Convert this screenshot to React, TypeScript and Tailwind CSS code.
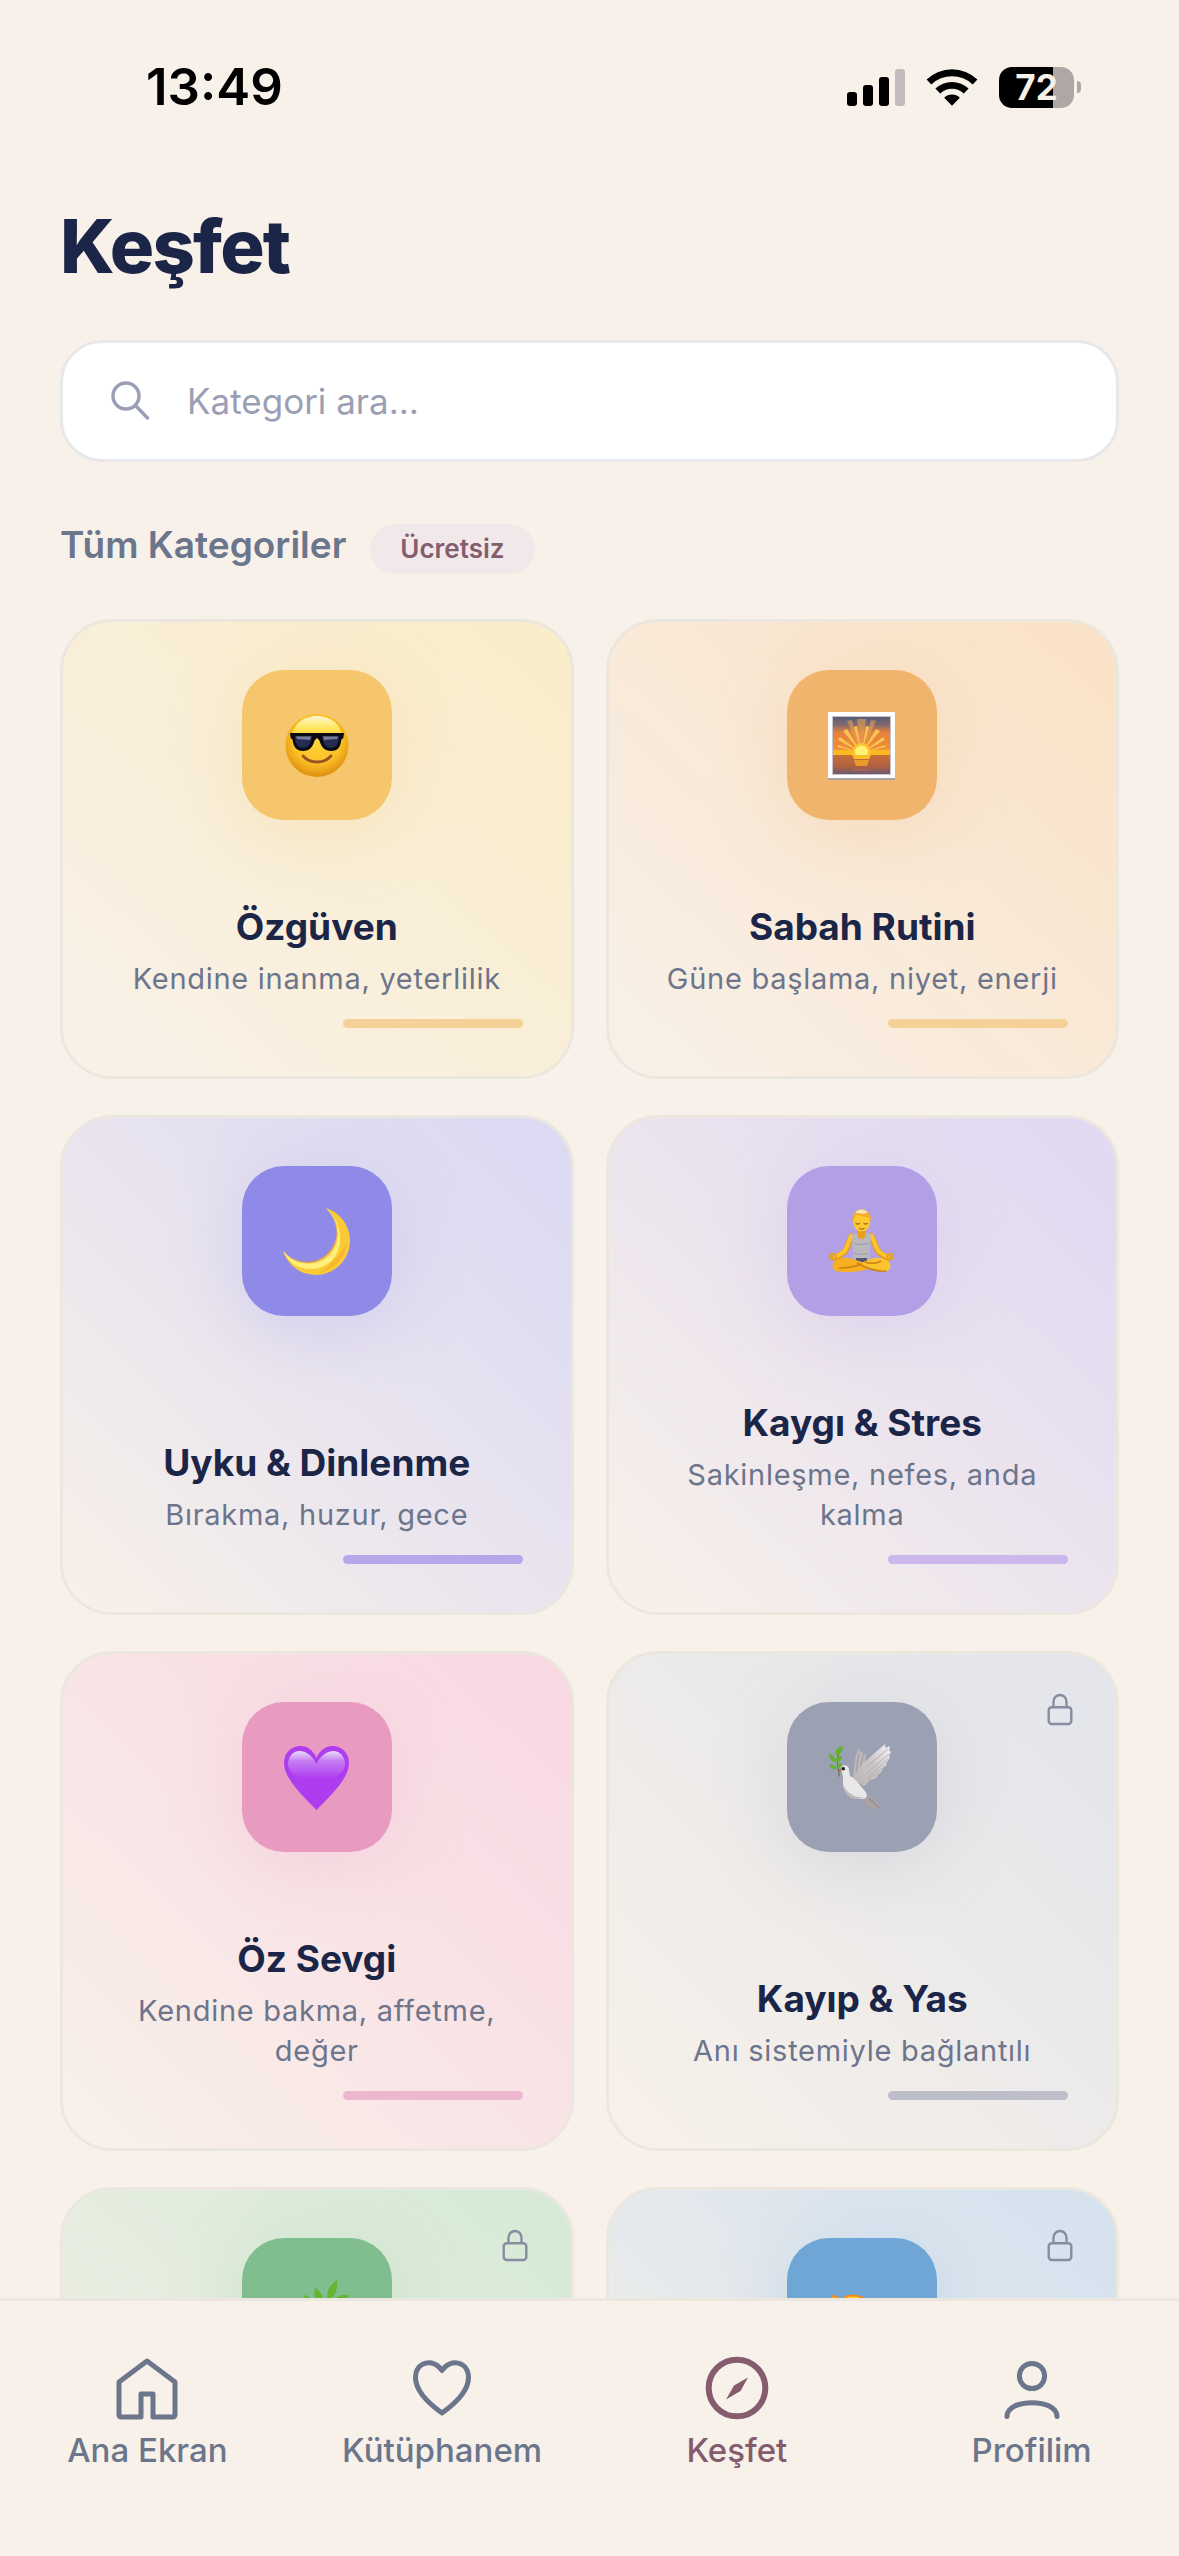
import type { ReactNode } from "react";
import clsx from "clsx";

/* ---------- Emoji drawings, all on a 72 x 72 canvas ---------- */

function CoolFace() {
    return (
        <svg viewBox="0 0 72 72" className="size-[72px]" aria-hidden="true">
            <defs>
                <radialGradient id="face" cx="0.5" cy="0.4" r="0.6">
                    <stop offset="0" stopColor="#ffd83f" />
                    <stop offset="0.65" stopColor="#fbbf24" />
                    <stop offset="1" stopColor="#dd8f10" />
                </radialGradient>
                <linearGradient id="shine" x1="0" y1="0" x2="0" y2="1">
                    <stop offset="0" stopColor="#fdf0d0" />
                    <stop offset="0.4" stopColor="#fff08a" />
                    <stop offset="1" stopColor="#ffe545" stopOpacity="0.6" />
                </linearGradient>
            </defs>
            <circle cx="36" cy="36.500" r="31.500" fill="url(#face)" />
            <path d="M12 25c1-11 12-18 24-18s23 7 24 18z" fill="url(#shine)" />
            <path d="M9 24h54l-.6 5-2 1.500c-1 8-4 11.500-10 11.500-7 0-10-4-12-10.500L36 29l-2.400 2.500C31.600 38 28.600 42 22 42c-6 0-9.500-3.500-10.500-11.500L9.600 29z" fill="#0a0a14" />
            <path d="M14 27h17c-1 8-4 12-9 12s-8-4-8-12zM41 27h17c0 8-3 12-8 12s-8-4-9-12z" fill="#252c50" />
            <path d="M15 27.500h15l-1 3.500-13-1zM42 27.500h15l-1 2.500-13 1z" fill="#777c98" />
            <path d="M22 47c7 8 21 8 28 0" fill="none" stroke="#9b5226" strokeWidth="2.800" strokeLinecap="round" />
        </svg>
    );
}

function Sunrise() {
    return (
        <svg viewBox="0 0 72 72" className="size-[72px]" aria-hidden="true">
            <defs>
                <linearGradient id="sky" x1="0" y1="0" x2="0" y2="1">
                    <stop offset="0" stopColor="#565e78" />
                    <stop offset="0.2" stopColor="#7f6870" />
                    <stop offset="0.4" stopColor="#e5803c" />
                    <stop offset="1" stopColor="#f69438" />
                </linearGradient>
                <linearGradient id="sea" x1="0" y1="0" x2="0" y2="1">
                    <stop offset="0" stopColor="#c96f3b" />
                    <stop offset="0.6" stopColor="#b0603f" />
                    <stop offset="1" stopColor="#6b5a74" />
                </linearGradient>
            </defs>
            <rect x="2" y="4" width="67" height="67" fill="#a9a4a5" />
            <rect x="2" y="3" width="67" height="66" fill="#fff" />
            <rect x="6" y="7" width="59" height="59" fill="#c8c4ca" />
            <rect x="7" y="8" width="57" height="38" fill="url(#sky)" />
            <path d="M35.500 44 31 10h9zM35.500 44 21 12l5-1zM35.500 44 50 12l-5-1z" fill="#e6a055" opacity="0.6" />
            <path d="M35.500 44 17 22l4-2zM35.500 44 12 31l2-3zM35.500 44 54 22l-4-2zM35.500 44l23.500-13-2-3zM35.500 44 12 38v-2zM35.500 44 59 38v-2zM35.500 44 28 18l3-1zM35.500 44 43 18l-3-1z" fill="#f8c553" />
            <path d="M7 41h57v5H7z" fill="#fbba22" />
            <circle cx="35.500" cy="43" r="9" fill="#fdc52d" />
            <circle cx="35.500" cy="43" r="6.500" fill="#fff176" />
            <rect x="7" y="46" width="57" height="19" fill="url(#sea)" />
            <path d="M26 46h19l-2 4H28z" fill="#f9bd26" />
            <path d="M28 51h15l-2 6H30z" fill="#e99a2b" />
            <path d="M27 60h17v2H27z" fill="#a96252" />
        </svg>
    );
}

function Moon() {
    return (
        <svg viewBox="0 0 72 72" className="size-[72px]" aria-hidden="true">
            <path d="M44.700 3A34.200 34.200 0 1 1 2 45.500 30.400 30.400 0 1 0 44.700 3z" fill="#fcca35" />
            <path d="M44.700 3C67 21 64 61 32 64 18 65 7 58 2 45.500 11 60 30 61 42 53 60 41 60 18 44.700 3z" fill="#fff07c" />
            <path d="M48 5C63 24 58 46 42 55c-11 6-24 4-33-3 13 7 26 6 35-2 14-12 15-28 4-45z" fill="#ef9d1b" opacity="0.55" />
            <path d="M66 38c-2 17-15 27-28 30 11-7 20-17 28-30z" fill="#f0a72b" opacity="0.55" />
        </svg>
    );
}

function Lotus() {
    return (
        <svg viewBox="0 0 72 72" className="size-[72px]" aria-hidden="true">
            <path d="M26 31C20 40 24 46 9 53" fill="none" stroke="#e89b16" strokeWidth="6" strokeLinecap="round" />
            <path d="M45 31c6 9 2 15 17 22" fill="none" stroke="#e89b16" strokeWidth="6" strokeLinecap="round" />
            <path d="M25.500 30.500C20 40 24 45 9 52" fill="none" stroke="#fdc52d" strokeWidth="4" strokeLinecap="round" />
            <path d="M45.500 30.500c5.500 9.500 1.500 14.500 16.500 21.500" fill="none" stroke="#fdc52d" strokeWidth="4" strokeLinecap="round" />
            <path d="M31 23h9v8l-4.500 5L31 31z" fill="#e9a01d" />
            <path d="M26 29c2 0 4-.5 5-1 0 8 9 8 9 0 1 .5 3 1 5 1 0 9-2 14-.5 25H26.500c1.500-11-.5-16-.5-25z" fill="#b9b8bd" />
            <path d="M28 38c5 2 10 2 15 0M28 48c5 2 10 2 15 0" fill="none" stroke="#a2a1a8" strokeWidth="1.200" />
            <path d="M30 53h11v11H30z" fill="#565572" />
            <path d="M13 54c8-3 14 0 28 5 5 2 3 5-2 6-9 2-22 3-29 1-6-3-4-10 3-12z" fill="#f6b021" />
            <path d="M58 54c-8-3-14 0-25 5 7 5 19 8 28 7 6-3 4-10-3-12z" fill="#fcc331" />
            <path d="M31 58c9 5 20 9 29 8M13 63c8 0 15-1 23-4M39 57c6 2 11 2 16-1" fill="none" stroke="#cb8012" strokeWidth="1.500" />
            <circle cx="7" cy="51.500" r="2.800" fill="none" stroke="#eba019" strokeWidth="2" />
            <circle cx="64" cy="51.500" r="2.800" fill="none" stroke="#eba019" strokeWidth="2" />
            <ellipse cx="35.600" cy="17" rx="8.500" ry="9.500" fill="#fdc931" />
            <path d="M26.200 17c-1-17 20-17 19 0-1-3-2-4-3-5-5 0-9-1-12-3 0 3-3 5-4 8z" fill="#f3ac24" />
            <path d="M29 7.500c4-4 9-4 13 0-4 2-9 1-13 0z" fill="#fbe5b6" />
            <path d="M30 18.500c1 .8 2 .8 3.500 0M38 18.500c1 .8 2 .8 3.500 0M33.500 23.500c1.500.8 3 .8 4.500 0" fill="none" stroke="#a5651a" strokeWidth="1.200" strokeLinecap="round" />
        </svg>
    );
}

function PurpleHeart() {
    return (
        <svg viewBox="0 0 72 72" className="size-[72px]" aria-hidden="true">
            <defs>
                <linearGradient id="heart" x1="0" y1="0" x2="0" y2="1">
                    <stop offset="0" stopColor="#e8defa" />
                    <stop offset="0.35" stopColor="#c77df3" />
                    <stop offset="1" stopColor="#ae3df0" />
                </linearGradient>
            </defs>
            <path d="M35.500 69C20 53 3 37 3 22 3 3 28-2 35.500 17 43-2 68 3 68 22c0 15-17 31-32.500 47z" fill="#ae3df0" />
            <path d="M35.500 38C18 38 7 34 7 22 9 6 27 6 35.500 23 44 6 62 6 64 22 64 34 53 38 35.500 38z" fill="url(#heart)" />
        </svg>
    );
}

function Dove() {
    return (
        <svg viewBox="0 0 72 72" className="size-[72px]" aria-hidden="true">
            <defs>
                <linearGradient id="wing" x1="1" y1="0" x2="0" y2="1">
                    <stop offset="0" stopColor="#f4f3f5" />
                    <stop offset="0.5" stopColor="#c9c4c6" />
                    <stop offset="1" stopColor="#bbb4b5" />
                </linearGradient>
            </defs>
            <path d="M13.300 35.500C13 27 8 20 15.500 6" fill="none" stroke="#557f3c" strokeWidth="1.200" />
            <path d="M17 5c-6 1-8 4-7.500 9 5 0 7.500-4 7.500-9zM3 12c5 2 6 5 6 9-4-1-6.500-4-6-9zM16 15c-5 0-7 2-7 6 4 1 6.500-2 7-6zM3 24c4-1.500 6 0 8 3-3 2-6 1-8-3zM15.500 22c-3 0-4 2-4 5 3 0 4-2 4-5z" fill="#64b32e" />
            <path d="M27 36c1-7 1-15 3-22l2.500-7 2 5 2-2 1 5 2-3c1 8-2 19-7 27z" fill="#bcb6b8" />
            <path d="M30 34c1-7 1-13 3-21M33 32c1-6 3-11 4-17" fill="none" stroke="#9d989f" strokeWidth="1" />
            <path d="M38 54c6 1 12 5 18 12l-2 2.500c-8 0-13-4-18-9z" fill="#a9a3a5" />
            <path d="M43 58c4 2 7 5 10 9" fill="none" stroke="#857f88" strokeWidth="1" />
            <path d="M27 38c3-8 8-14 15-20L59 3l.5 4L64 5l-1 5 2 .5-2 5 1 1-4 6 1 1-5 5v2l-5 4v2l-7 3-6 6z" fill="url(#wing)" />
            <path d="M62 8 40 26M63 13 41 32M62 18 42 36M59 25 42 39" fill="none" stroke="#aaa4aa" strokeWidth="0.700" />
            <path d="M15 28c0-5 8-5 8 1l1 6c5 2 9 8 14 14 4 4 4 8-1 9-11 1-20-6-20-16 0-6 0-8-2-14z" fill="#e9e7e7" />
            <path d="M18 45c4 8 11 12 20 11-9 5-19 1-20-11z" fill="#bfbab9" />
            <circle cx="17.200" cy="27.800" r="1.800" fill="#1e1b1c" />
            <path d="m15 28-3.500 1.500 3 1.500z" fill="#bc5d4f" />
        </svg>
    );
}

function Herb() {
    return (
        <svg viewBox="0 0 72 72" className="size-[72px]" aria-hidden="true">
            <path d="M20 68c10-14 18-26 26-44" fill="none" stroke="#4f8f27" strokeWidth="2.500" />
            <path d="M56 3c-9 6-11 13-9 21 8-5 10-12 9-21zM34 11c7 4 8 9 8 16-8-3-10-9-8-16zM23 18c8 2 13 7 14 14-9-1-14-6-14-14zM68 18c-9-1-18 3-21 13 9 2 17-3 21-13zM14 32c10 0 15 5 18 12-9 1-15-3-18-12zM63 36c-9-3-17 0-22 9 9 3 17-1 22-9z" fill="#66b432" />
        </svg>
    );
}

function Handshake() {
    return (
        <svg viewBox="0 0 72 72" className="size-[72px]" aria-hidden="true">
            <path d="m6 18 5 1 4 3c6-6 16-5 22-2l10 4 16-3v22l-12 8-16 8-18-8L6 42z" fill="#ee8f1d" />
            <path d="m7 20 4 1 4 3c6-6 16-5 21-2l11 4 14-3v18l-10 8-16 7-16-8L7 40z" fill="#fdc52d" />
        </svg>
    );
}

/* ---------- Line icons ---------- */

function LockIcon() {
    return (
        <svg viewBox="0 0 40 40" className="size-10" fill="none" stroke="#878da0" strokeWidth="2.400" aria-hidden="true">
            <rect x="8.700" y="17.200" width="22.600" height="16.800" rx="3" />
            <path d="M13.500 17v-5.500a6.500 6.500 0 0 1 13 0V17" />
        </svg>
    );
}

function SearchIcon() {
    return (
        <svg viewBox="0 0 42 42" className="size-[42px] shrink-0" fill="none" stroke="#9b9fb3" strokeWidth="3.400" strokeLinecap="round" aria-hidden="true">
            <circle cx="17" cy="16" r="13" />
            <path d="m26.500 25.500 12 12.500" />
        </svg>
    );
}

function NavIcon({ children }: { children: ReactNode }) {
    return (
        <svg viewBox="0 0 72 72" className="size-[72px]" fill="none" stroke="currentColor" strokeWidth="5" strokeLinecap="round" strokeLinejoin="round" aria-hidden="true">
            {children}
        </svg>
    );
}

/* ---------- Data ---------- */

interface Category {
    id: string;
    title?: string;
    description?: string;
    icon: ReactNode;
    card: string;
    tile: string;
    bar: string;
    locked?: boolean;
}

const categories: Category[] = [
    {
        id: "confidence",
        title: "Özgüven",
        description: "Kendine inanma, yeterlilik",
        icon: <CoolFace />,
        card: "to-[#faedcb]",
        tile: "bg-[#f6c66c] shadow-[0_12px_72px_rgba(246,198,108,0.28)]",
        bar: "bg-[#f6d197]",
    },
    {
        id: "morning",
        title: "Sabah Rutini",
        description: "Güne başlama, niyet, enerji",
        icon: <Sunrise />,
        card: "to-[#fae3c9]",
        tile: "bg-[#f0b46c] shadow-[0_12px_72px_rgba(240,180,108,0.25)]",
        bar: "bg-[#f6d197]",
    },
    {
        id: "sleep",
        title: "Uyku & Dinlenme",
        description: "Bırakma, huzur, gece",
        icon: <Moon />,
        card: "to-[#dddaf3]",
        tile: "bg-[#8f8ae8] shadow-[0_12px_72px_rgba(143,138,232,0.25)]",
        bar: "bg-[#b8a6ea]",
    },
    {
        id: "stress",
        title: "Kaygı & Stres",
        description: "Sakinleşme, nefes, anda kalma",
        icon: <Lotus />,
        card: "to-[#e2daf2]",
        tile: "bg-[#b29fe6] shadow-[0_12px_72px_rgba(178,159,230,0.25)]",
        bar: "bg-[#cbb7ec]",
    },
    {
        id: "self-love",
        title: "Öz Sevgi",
        description: "Kendine bakma, affetme, değer",
        icon: <PurpleHeart />,
        card: "to-[#f9dae4]",
        tile: "bg-[#e89ac1] shadow-[0_12px_72px_rgba(232,154,193,0.25)]",
        bar: "bg-[#eeb7d0]",
    },
    {
        id: "grief",
        title: "Kayıp & Yas",
        description: "Anı sistemiyle bağlantılı",
        icon: <Dove />,
        card: "to-[#e4e6eb]",
        tile: "bg-[#9ba0b3] shadow-[0_12px_72px_rgba(155,160,179,0.25)]",
        bar: "bg-[#bdbeca]",
        locked: true,
    },
    {
        id: "nature",
        icon: <Herb />,
        card: "to-[#d7ead8]",
        tile: "bg-[#80be90] shadow-[0_12px_72px_rgba(128,190,144,0.25)]",
        bar: "bg-[#aed6b6]",
        locked: true,
    },
    {
        id: "relations",
        icon: <Handshake />,
        card: "to-[#d6e3ef]",
        tile: "bg-[#6fa6d6] shadow-[0_12px_72px_rgba(111,166,214,0.25)]",
        bar: "bg-[#a3c6e5]",
        locked: true,
    },
];

const tabs = [
    {
        label: "Ana Ekran",
        icon: <path d="M36 9 8 30v33a2 2 0 0 0 2 2h20V42h12v23h20a2 2 0 0 0 2-2V30z" />,
    },
    {
        label: "Kütüphanem",
        icon: <path d="M36 61C22 51 9.500 38 9.500 25.500 9.500 9 28 6 36 18.500 44 6 62.500 9 62.500 25.500 62.500 38 50 51 36 61z" />,
    },
    {
        label: "Keşfet",
        active: true,
        icon: (
            <>
                <circle cx="36" cy="36" r="28.300" strokeWidth="6" />
                <path d="M47 25.500 39.500 39 25 47.500 33 33.500z" fill="currentColor" stroke="none" />
            </>
        ),
    },
    {
        label: "Profilim",
        icon: (
            <>
                <circle cx="36" cy="24" r="12.600" />
                <path d="M11 64.500C11 46 61 46 61 64.500" />
            </>
        ),
    },
];

/* ---------- Sections ---------- */

function StatusBar() {
    return (
        <div className="flex h-[174px] shrink-0 items-center justify-between pr-[98px] pl-[146px] text-black">
            <span className="text-[51px] leading-[60px] font-semibold">13:49</span>
            <div className="flex items-center gap-[21px]">
                <svg viewBox="0 0 58 38" className="h-[38px] w-[58px]" aria-hidden="true">
                    <rect x="0" y="24" width="10" height="14" rx="3" />
                    <rect x="16" y="17" width="10" height="21" rx="3" />
                    <rect x="32" y="9" width="10" height="29" rx="3" />
                    <rect x="48" y="1" width="10" height="37" rx="3" fill="#c2bbb9" />
                </svg>
                <svg viewBox="0 0 52 38" className="h-[38px] w-[52px]" aria-hidden="true">
                    <path d="M.6 11.500a36.500 36.500 0 0 1 50.800 0l-4.700 5a29.800 29.800 0 0 0-41.400 0z" />
                    <path d="M9.400 20.600a24 24 0 0 1 33.200 0l-4.800 5a17 17 0 0 0-23.600 0z" />
                    <path d="M18.200 29.700a11.300 11.300 0 0 1 15.600 0L26 37.800z" />
                </svg>
                <div className="flex items-center gap-[3px]">
                    <div className="flex h-[41px] w-[75px] items-center justify-center rounded-[13px] bg-linear-to-r from-black from-72% to-[#afa7a5] to-72%">
                        <span className="text-[35px] leading-[41px] font-bold text-[#f8f1e9]">72</span>
                    </div>
                    <div className="h-3 w-1 rounded-r-full bg-[#afa7a5]" />
                </div>
            </div>
        </div>
    );
}

function CategoryCard({ category }: { category: Category }) {
    return (
        <button
            type="button"
            className={clsx(
                "relative flex min-h-[460px] flex-col items-center justify-between overflow-hidden rounded-[52px] border-3 border-[#ebe7df] bg-linear-to-tr from-[#f8f1e9] to-90% px-12 py-12",
                category.card,
            )}
        >
            <span className={clsx("flex size-[150px] shrink-0 items-center justify-center rounded-[42px]", category.tile)}>
                {category.icon}
            </span>
            {category.locked && (
                <span className="absolute top-9 right-9">
                    <LockIcon />
                </span>
            )}
            <span className="flex w-full flex-col pt-[83px]">
                <span className="text-[37px] leading-[48px] font-bold text-[#1b2547]">{category.title}</span>
                <span className="mt-2 text-[29px] leading-10 tracking-wide text-[#6c758c]">{category.description}</span>
                <span className={clsx("mt-5 h-[9px] w-[180px] self-end rounded-full", category.bar)} />
            </span>
        </button>
    );
}

function TabBar() {
    return (
        <nav className="grid h-[258px] shrink-0 grid-cols-4 border-t-3 border-[#ebe7df] bg-[#f8f1e9] pt-[51px]">
            {tabs.map((tab) => (
                <a
                    key={tab.label}
                    href="#"
                    aria-current={tab.active ? "page" : undefined}
                    className={clsx("flex flex-col items-center gap-[6px]", tab.active ? "text-[#845c6e]" : "text-[#6b758c]")}
                >
                    <NavIcon>{tab.icon}</NavIcon>
                    <span className="text-[33px] leading-10 font-medium">{tab.label}</span>
                </a>
            ))}
        </nav>
    );
}

export default function App() {
    return (
        <div className="flex h-screen flex-col overflow-hidden bg-[#f8f1e9] font-['Inter',sans-serif]">
            <StatusBar />
            <main className="min-h-0 flex-1 overflow-hidden px-[60px] pt-[27px]">
                <h1 className="text-[74px] leading-[90px] font-extrabold tracking-tight text-[#1b2547]">Keşfet</h1>

                <label className="mt-[49px] flex h-[122px] items-center gap-9 rounded-[42px] border-3 border-[#e8e8ea] bg-white px-[46px]">
                    <SearchIcon />
                    <input
                        type="search"
                        aria-label="Kategori ara"
                        placeholder="Kategori ara..."
                        className="min-w-0 flex-1 text-[35px] leading-[44px] text-[#1b2547] outline-none placeholder:text-[#9b9fb3]"
                    />
                </label>

                <div className="mt-[59px] flex items-baseline gap-6">
                    <h2 className="text-[37px] leading-[48px] font-semibold text-[#6b758c]">Tüm Kategoriler</h2>
                    <span className="rounded-full bg-[#f1e8ea] px-[30px] py-2 text-[26px] leading-[34px] font-semibold text-[#845c6e]">Ücretsiz</span>
                </div>

                <div className="mt-[45px] grid grid-cols-2 gap-x-8 gap-y-9">
                    {categories.map((category) => (
                        <CategoryCard key={category.id} category={category} />
                    ))}
                </div>
            </main>
            <TabBar />
        </div>
    );
}
